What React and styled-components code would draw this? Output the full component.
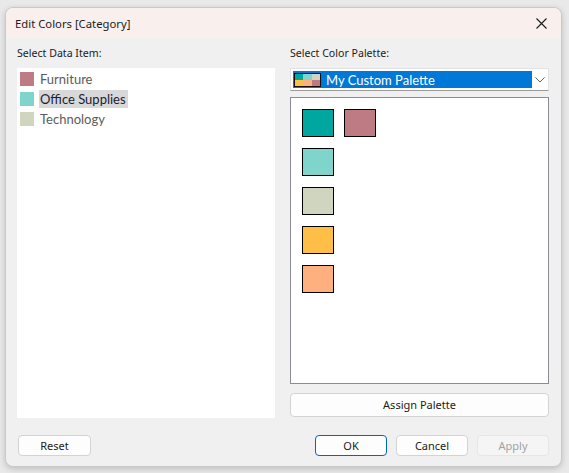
import React from "react"
import styled, { createGlobalStyle } from "styled-components"

const Global = createGlobalStyle`
  html, body {
    margin: 0;
    padding: 0;
    background: #e9e9e9;
  }
  body {
    width: 569px;
    height: 473px;
    overflow: hidden;
    font-family: "Noto Sans", "Open Sans", sans-serif;
  }
`

const Stage = styled.div`
  padding: 7px 7px 6px 5px;
`

const Window = styled.div`
  width: 555px;
  height: 458px;
  border: 1px solid #c9c9c9;
  border-radius: 8px;
  background: #f0f0f0;
  box-shadow: 0 2px 6px rgba(0, 0, 0, 0.18);
  display: flex;
  flex-direction: column;
  overflow: hidden;
`

const TitleBar = styled.div`
  height: 30px;
  flex: none;
  background: #f9f0ee;
  display: flex;
  align-items: center;
  justify-content: space-between;
  padding: 0 14px 0 9px;
  font-size: 11.3px;
  color: #1b1b1b;
`

const Body = styled.div`
  flex: 1;
  display: flex;
  flex-direction: column;
  padding: 7px 12px 10px 11px;
`

const Columns = styled.div`
  display: grid;
  grid-template-columns: 258px 259px;
  column-gap: 15px;
`

const Column = styled.div`
  display: flex;
  flex-direction: column;
`

const Label = styled.div`
  height: 16px;
  line-height: 16px;
  margin-bottom: 7px;
  font-size: 10.6px;
  color: #1b1b1b;
`

const ItemList = styled.div`
  height: 350px;
  background: #fff;
  padding: 2px 0 0 3px;
  box-sizing: border-box;
  display: flex;
  flex-direction: column;
  gap: 2px;
`

const Item = styled.div`
  display: flex;
  align-items: center;
  height: 18px;
  font-family: Lato, "Noto Sans", sans-serif;
  font-size: 13px;
`

const ItemSwatch = styled.span`
  width: 14px;
  height: 14px;
  background: ${p => p.$color};
  margin-right: 5px;
  flex: none;
`

const ItemText = styled.span`
  height: 18px;
  line-height: 18px;
  padding: 0 2px 0 1px;
  color: ${p => (p.$selected ? "#1a1d33" : "#5b5b5b")};
  background: ${p => (p.$selected ? "#d8d8d8" : "transparent")};
`

const Dropdown = styled.div`
  height: 23px;
  box-sizing: border-box;
  background: #fff;
  border: 1px solid #e2e2e2;
  border-bottom-color: #9a9a9a;
  padding: 2px 0 2px 2px;
  display: flex;
  align-items: center;
`

const Selected = styled.div`
  width: 238px;
  height: 17px;
  background: #0078d7;
  display: flex;
  align-items: center;
  padding-left: 1px;
  font-family: Lato, "Noto Sans", sans-serif;
  font-size: 13px;
  color: #fff;
`

const Chevron = styled.div`
  flex: 1;
  display: flex;
  justify-content: center;
`

const MiniPalette = styled.div`
  width: 25px;
  height: 12px;
  border: 1px solid #111;
  display: grid;
  grid-template-columns: repeat(3, 1fr);
  grid-template-rows: repeat(2, 1fr);
  margin-right: 5px;
`

const MiniCell = styled.span`
  background: ${p => p.$color};
`

const PalettePanel = styled.div`
  margin-top: 6px;
  height: 287px;
  box-sizing: border-box;
  background: #fff;
  border: 1px solid #8c8c94;
  padding: 11px 0 0 11px;
  display: grid;
  grid-template-columns: repeat(2, 32px);
  grid-auto-rows: 28px;
  column-gap: 10px;
  row-gap: 11px;
  align-content: start;
`

const Chip = styled.div`
  grid-column: ${p => p.$col};
  border: 1.5px solid #000;
  box-sizing: border-box;
  background: ${p => p.$color};
`

const Button = styled.button`
  height: ${p => (p.$tall ? "24px" : "21px")};
  width: ${p => p.$width || "72px"};
  box-sizing: border-box;
  border-radius: 4px;
  border: 1px solid ${p => (p.$primary ? "#0067c0" : p.disabled ? "#e6e6e6" : "#d3d3d3")};
  background: ${p => (p.disabled ? "#f5f5f5" : "#fdfdfd")};
  color: ${p => (p.disabled ? "#a2a2a2" : "#1b1b1b")};
  font-family: "Noto Sans", "Open Sans", sans-serif;
  font-size: 11px;
  padding: 0;
`

const AssignRow = styled.div`
  margin-top: 8px;
`

const Footer = styled.div`
  margin-top: 17px;
  display: flex;
  align-items: center;
  gap: 9px;
  padding-left: 1px;
`

const Spacer = styled.div`
  flex: 1;
`

const items = [
  { name: "Furniture", color: "#bf7b84" },
  { name: "Office Supplies", color: "#7fd5cc", selected: true },
  { name: "Technology", color: "#cfd6be" },
]

const chips = [
  { color: "#00a6a0", col: 1 },
  { color: "#bf7b83", col: 2 },
  { color: "#7fd5cb", col: 1 },
  { color: "#cfd5bf", col: 1 },
  { color: "#ffbe45", col: 1 },
  { color: "#ffb07e", col: 1 },
]

const mini = ["#00a6a0", "#7fd5cb", "#cfd5bf", "#ffbe45", "#ffb07e", "#bf7b83"]

export default function App() {
  return (
    <Stage>
      <Global />
      <Window>
        <TitleBar>
          <span>Edit Colors [Category]</span>
          <svg width="11" height="11" viewBox="0 0 11 11">
            <path d="M0.5 0.5 L10.5 10.5 M10.5 0.5 L0.5 10.5" stroke="#1b1b1b" strokeWidth="1.1" />
          </svg>
        </TitleBar>
        <Body>
          <Columns>
            <Column>
              <Label>Select Data Item:</Label>
              <ItemList>
                {items.map(it => (
                  <Item key={it.name}>
                    <ItemSwatch $color={it.color} />
                    <ItemText $selected={it.selected}>{it.name}</ItemText>
                  </Item>
                ))}
              </ItemList>
            </Column>
            <Column>
              <Label>Select Color Palette:</Label>
              <Dropdown>
                <Selected>
                  <MiniPalette>
                    {mini.map((c, i) => (
                      <MiniCell key={i} $color={c} />
                    ))}
                  </MiniPalette>
                  My Custom Palette
                </Selected>
                <Chevron>
                  <svg width="10" height="6" viewBox="0 0 10 6">
                    <path d="M0.5 0.5 L5 5 L9.5 0.5" fill="none" stroke="#606060" strokeWidth="1" />
                  </svg>
                </Chevron>
              </Dropdown>
              <PalettePanel>
                {chips.map((c, i) => (
                  <Chip key={i} $color={c.color} $col={c.col} />
                ))}
              </PalettePanel>
              <AssignRow>
                <Button $tall $width="100%">Assign Palette</Button>
              </AssignRow>
            </Column>
          </Columns>
          <Footer>
            <Button $width="73px">Reset</Button>
            <Spacer />
            <Button $primary>OK</Button>
            <Button>Cancel</Button>
            <Button disabled>Apply</Button>
          </Footer>
        </Body>
      </Window>
    </Stage>
  )
}
